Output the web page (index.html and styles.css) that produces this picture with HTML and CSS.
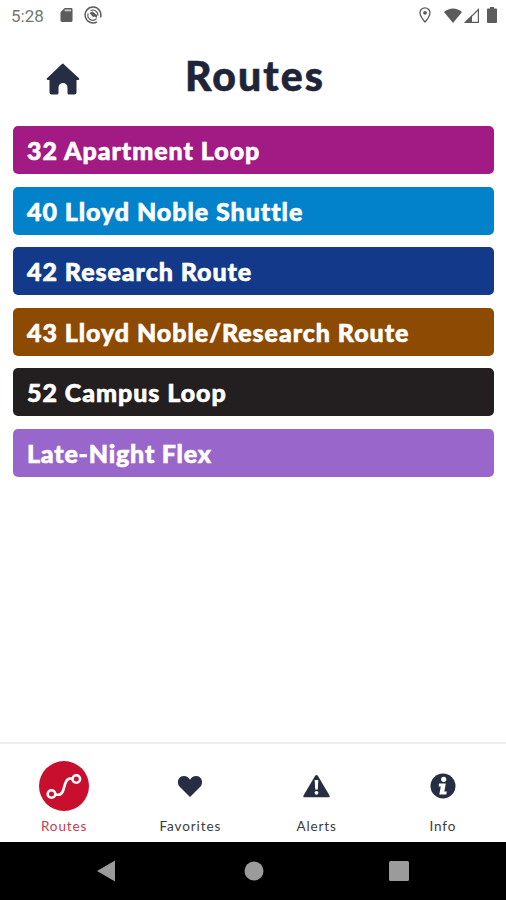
FILE: index.html
```
<!DOCTYPE html>
<html lang="en">
<head>
    <meta charset="UTF-8">
    <title>Routes</title>
    <meta name="viewport" content="width=device-width, initial-scale=1.0">
    <link rel="stylesheet" href="styles.css">
</head>
<body>
<div class="status-bar">
    <span class="clock">5:28</span>
    <svg class="sd" width="13" height="16" viewBox="0 0 14 16">
        <path d="M5 0.5h7a1.5 1.5 0 0 1 1.5 1.5v12a1.5 1.5 0 0 1-1.5 1.5H2A1.5 1.5 0 0 1 .5 14V5z" fill="#5c5c5c"/>
        <path d="M5 3h7" stroke="#ccc" stroke-width="2"/>
    </svg>
    <svg class="sync" width="18" height="18" viewBox="0 0 18 18" fill="none" stroke="#5c5c5c">
        <path d="M13 15.800A7.900 7.900 0 1 1 16.500 11.500" stroke-width="1.500"/>
        <path d="M12.500 12.700A5 5 0 0 1 4.200 7.500M6.500 4.700A5 5 0 0 1 13.900 9.500" stroke-width="1.200"/>
        <path d="M5.500 7l3-1.500 4.500 3.500v3l-2.500-1.500-1.500.5z" fill="#5c5c5c" stroke="none"/>
    </svg>
    <div class="status-right">
        <svg width="12" height="16" viewBox="0 0 12 16">
            <path d="M6 .8a5 5 0 0 0-5 5C1 9.400 6 15 6 15s5-5.600 5-9.200a5 5 0 0 0-5-5z" fill="none" stroke="#5c5c5c" stroke-width="1.300"/>
            <circle cx="6" cy="5.800" r="1.900" fill="#5c5c5c"/>
        </svg>
        <svg class="wifi" width="18" height="15" viewBox="0 0 18 15">
            <path d="M9 15L0 4C5-.8 13-.8 18 4z" fill="#5c5c5c"/>
        </svg>
        <svg class="signal" width="15" height="15" viewBox="0 0 15 15">
            <path d="M1.500 14.400L14.400 1.500v12.900z" fill="none" stroke="#5c5c5c" stroke-width="1.200"/>
            <path d="M0 15l8-8v8z" fill="#5c5c5c"/>
        </svg>
        <svg class="battery" width="10" height="16" viewBox="0 0 10 16">
            <path d="M3 0h4v1.500h2a1 1 0 0 1 1 1V15a1 1 0 0 1-1 1H1a1 1 0 0 1-1-1V2.500a1 1 0 0 1 1-1h2z" fill="#5c5c5c"/>
        </svg>
    </div>
</div>

<header class="header">
    <a class="home" href="#" aria-label="Home">
        <svg width="34" height="32" viewBox="0 0 34 32">
            <path d="M17 .5L33 15.300q1 1.700-1 1.700h-1.500v12.500q0 2-2 2H23q-1.500 0-1.500-1.500v-5.500a4.500 4.500 0 0 0-9 0V30q0 1.500-1.500 1.500H5.500q-2 0-2-2V17H2q-2 0-1-1.700L15.700 1.200Q17 0 18.300 1.200z" fill="#272e44"/>
        </svg>
    </a>
    <h1>Routes</h1>
</header>

<main class="routes">
    <a class="route apartment" href="#">32 Apartment Loop</a>
    <a class="route shuttle" href="#">40 Lloyd Noble Shuttle</a>
    <a class="route research" href="#">42 Research Route</a>
    <a class="route noble" href="#">43 Lloyd Noble/Research Route</a>
    <a class="route campus" href="#">52 Campus Loop</a>
    <a class="route flex" href="#">Late-Night Flex</a>
</main>

<nav class="tabs">
    <a class="tab active" href="#">
        <span class="tab-icon">
            <svg width="36" height="28" viewBox="0 0 36 28" fill="none" stroke="#fff" stroke-width="2.600">
                <circle cx="5.500" cy="22" r="3.800"/>
                <circle cx="30.300" cy="7" r="3.800"/>
                <path d="M9.300 22.800h3.200c7.500 0 4-16.300 12-16.300h2"/>
            </svg>
        </span>
        <span class="tab-label">Routes</span>
    </a>
    <a class="tab favorites" href="#">
        <span class="tab-icon">
            <svg width="26" height="23" viewBox="0 0 26 23">
                <path d="M13 22L2.500 11.500C-.5 8 .8 1.300 6.700 1c3 0 5 1.500 6.300 3.700C14.300 2.500 16.300 1 19.300 1c5.900.3 7.200 7 4.200 10.500z" fill="#272e44"/>
            </svg>
        </span>
        <span class="tab-label">Favorites</span>
    </a>
    <a class="tab alerts" href="#">
        <span class="tab-icon">
            <svg width="27" height="23" viewBox="0 0 27 23">
                <path d="M13.500 0Q14.300 0 15 1L26.500 20.500q.7 1.800-1 1.800h-24q-1.700 0-1-1.800L12 1q.7-1 1.500-1z" fill="#272e44"/>
                <path d="M11.700 5h3.600l-.5 9.500h-2.600z" fill="#fff"/>
                <circle cx="13.500" cy="17.800" r="1.900" fill="#fff"/>
            </svg>
        </span>
        <span class="tab-label">Alerts</span>
    </a>
    <a class="tab info" href="#">
        <span class="tab-icon">
            <svg width="26" height="26" viewBox="0 0 26 26">
                <circle cx="13" cy="13" r="12.500" fill="#272e44"/>
                <circle cx="13.700" cy="6.300" r="2.600" fill="#fff"/>
                <path d="M9 10.500h6.800L14.300 18.500h2.500L16.300 21.500h-7l1.500-8H8.700z" fill="#fff"/>
            </svg>
        </span>
        <span class="tab-label">Info</span>
    </a>
</nav>

<div class="android-nav">
    <svg width="18" height="22" viewBox="0 0 18 22"><path d="M18 .5v21L0 11z" fill="#9b9b9b"/></svg>
    <svg class="nav-home" width="20" height="20" viewBox="0 0 20 20"><circle cx="10" cy="10" r="9.500" fill="#9b9b9b"/></svg>
    <svg width="20" height="20" viewBox="0 0 20 20"><rect width="20" height="20" rx="1.500" fill="#9b9b9b"/></svg>
</div>
</body>
</html>
```
FILE: styles.css
```
* {
    box-sizing: border-box;
}
body {
    margin: 0;
    height: 900px;
    display: flex;
    flex-direction: column;
    background: #fff;
    font-family: Lato, "Liberation Sans", sans-serif;
    overflow: hidden;
}
a {
    color: inherit;
    text-decoration: none;
}
svg {
    display: block;
}

/* android status bar */
.status-bar {
    height: 32px;
    padding: 0 9px 2px 11px;
    display: flex;
    align-items: center;
    color: #757575;
}
.clock {
    font-family: Roboto, sans-serif;
    font-size: 17px;
    width: 49px;
    padding-top: 2px;
}
.sync {
    margin-left: 11px;
}
.status-right {
    margin-left: auto;
    display: flex;
    align-items: center;
}
.wifi {
    margin-left: 13px;
}
.signal {
    margin-left: 2px;
}
.battery {
    margin-left: 8px;
}

.header {
    height: 94px;
    display: grid;
    grid-template-columns: 126px 1fr 122px;
    align-items: center;
}
.home {
    justify-self: center;
}
h1 {
    margin: 0;
    padding-bottom: 7px;
    font-size: 41px;
    font-weight: 900;
    line-height: 48px;
    letter-spacing: 2.1px;
    text-align: center;
    color: #1f2539;
    -webkit-text-stroke: 0.6px #1f2539;
}

.routes {
    flex: 1;
    padding: 0 12px 0 13px;
    display: flex;
    flex-direction: column;
    gap: 12.5px;
}
.route {
    height: 48px;
    padding-left: 14px;
    border-radius: 5px;
    color: #fff;
    font-size: 25px;
    font-weight: 900;
    line-height: 48px;
    letter-spacing: 0.95px;
    white-space: nowrap;
    -webkit-text-stroke: 0.6px #fff;
}
.apartment { background: #a21a83; }
.shuttle { background: #0282ca; }
.research { background: #133a8a; }
.noble { background: #8d4a02; }
.campus { background: #231f20; }
.flex {
    background: #9966cb;
    letter-spacing: 0.8px;
}

.tabs {
    height: 100px;
    padding-left: 1px;
    border-top: 2px solid #eee;
    display: grid;
    grid-template-columns: repeat(4, 1fr);
}
.tab {
    display: flex;
    flex-direction: column;
    align-items: center;
    padding-top: 17px;
    color: #3c3c3c;
}
.tab-icon {
    width: 50px;
    height: 50px;
    display: flex;
    align-items: center;
    justify-content: center;
    border-radius: 50%;
}
.tab-label {
    margin-top: 6px;
    font-size: 13.5px;
    line-height: 18px;
    letter-spacing: 0.9px;
}
.active {
    color: #c93a50;
}
.active .tab-icon {
    background: #c8102e;
}

.android-nav {
    height: 58px;
    padding: 0 97px;
    display: flex;
    align-items: center;
    justify-content: space-between;
    background: #000;
}
.nav-home {
    margin-left: 3px;
}
```
